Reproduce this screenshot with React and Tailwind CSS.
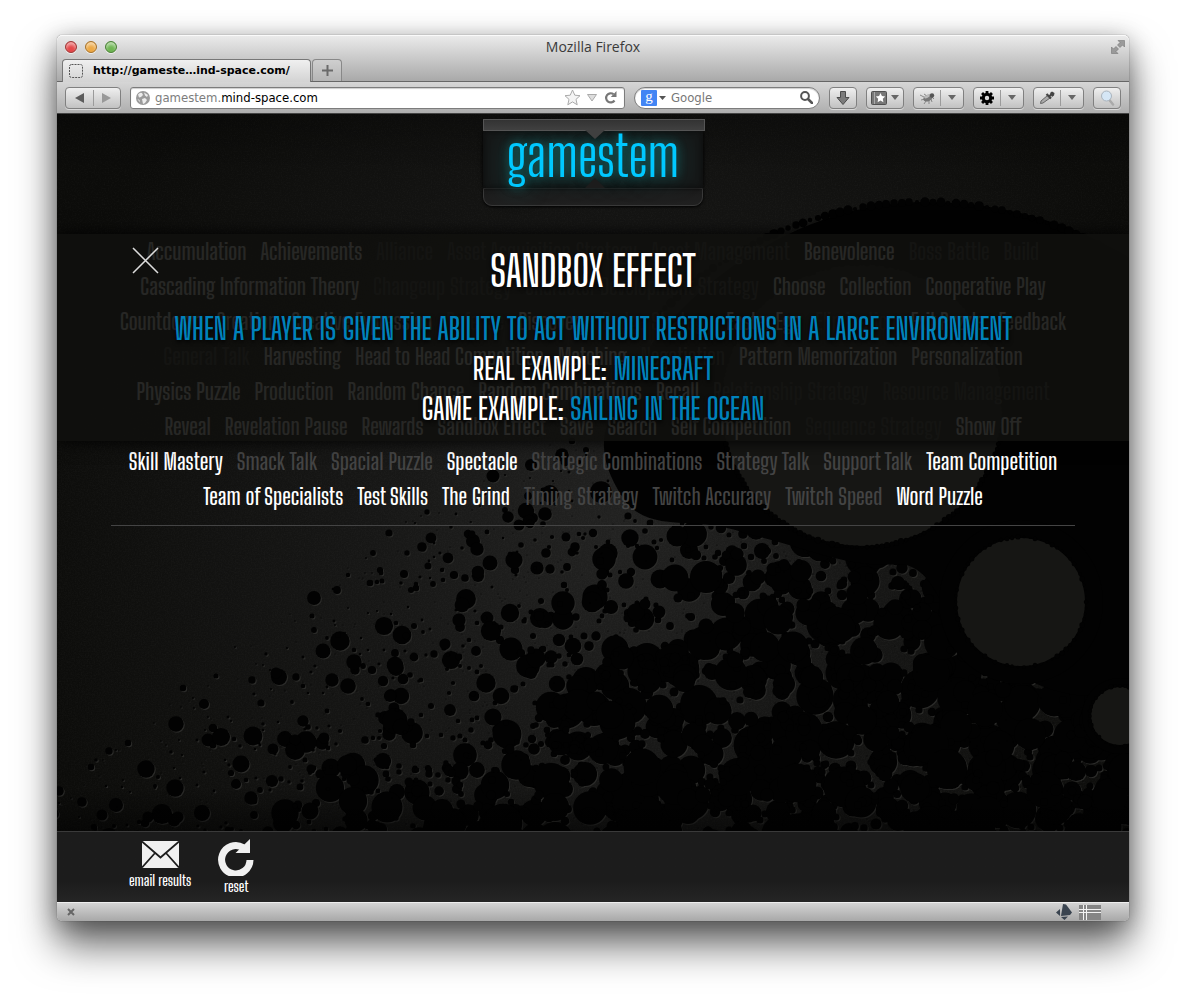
import React from "react";

const UI = "font-['Open_Sans','Noto_Sans',sans-serif]";
const DISPLAY = "font-['Big_Shoulders_Display','Oswald','Roboto_Condensed',sans-serif]";

// A leading "-" marks a mechanic that is not available.
const ROWS = [
  ["Accumulation", "Achievements", "-Alliance", "-Asset Acquisition Strategy", "-Asset Management", "Benevolence", "-Boss Battle", "-Build"],
  ["Cascading Information Theory", "-Changeup Strategy", "-Character Development Strategy", "Choose", "Collection", "Cooperative Play"],
  ["Countdown", "Creation", "Creative Expression", "-Defense", "Discovery", "-Dodge Strategy", "Easter Egg", "-Elimination", "Exit Puzzle", "Feedback"],
  ["-General Talk", "Harvesting", "Head to Head Competition", "Matching", "-Negotiation", "Pattern Memorization", "Personalization"],
  ["Physics Puzzle", "Production", "Random Chance", "Random Combinations", "Recall", "-Relationship Strategy", "-Resource Management"],
  ["Reveal", "Revelation Pause", "Rewards", "Sandbox Effect", "Save", "Search", "Self Competition", "-Sequence Strategy", "Show Off"],
  ["Skill Mastery", "-Smack Talk", "-Spacial Puzzle", "Spectacle", "-Strategic Combinations", "-Strategy Talk", "-Support Talk", "Team Competition"],
  ["Team of Specialists", "Test Skills", "The Grind", "-Timing Strategy", "-Twitch Accuracy", "-Twitch Speed", "Word Puzzle"],
];

function random(seed) {
  let s = seed;
  return () => {
    s = (s + 0x6d2b79f5) | 0;
    let t = Math.imul(s ^ (s >>> 15), 1 | s);
    t = (t + Math.imul(t ^ (t >>> 7), 61 | t)) ^ t;
    return ((t ^ (t >>> 14)) >>> 0) / 4294967296;
  };
}

function makeBubbles() {
  const rnd = random(77);
  const out = [];
  for (let i = 0; i < 13000; i++) {
    const x = rnd() * 1092 - 10;
    const y = 300 + rnd() * 430;
    const depth = (y - 672 + x * 0.78) / 1.27;
    const a = rnd();
    const b = rnd();
    if (depth < 0) continue;
    const t = Math.min(1, depth / 330);
    if (a > 0.14 + t * 0.32) continue;
    const r = 0.5 + Math.pow(b, 6) * (7 + t * 10) + (b > 0.3 ? t * 3 : 0);
    out.push([Math.round(x), Math.round(y), Math.round(r * 10) / 10]);
  }
  return out;
}
const BUBBLES = makeBubbles();

// Small circles set along an arc, so that its edge looks organic.
function rim(cx, cy, r, n, size) {
  const rnd = random(n);
  return Array.from({ length: n }, (_, i) => {
    const a = (i / n) * Math.PI * 2;
    return [Math.round(cx + Math.cos(a) * r), Math.round(cy + Math.sin(a) * r), size + rnd() * 3];
  });
}
const ARC = rim(868, 459, 371, 300, 2).filter(([x, y]) => y < 200 && x > 540);
const EDGES = [...rim(805, 291, 142, 180, 2), ...rim(964, 488, 65, 70, 1), ...rim(1063, 602, 30, 40, 1)];

function Backdrop() {
  return (
    <svg className="absolute inset-0 h-full w-full" viewBox="0 0 1072 717" preserveAspectRatio="xMidYMid slice" aria-hidden="true">
      <defs>
        <radialGradient id="base" gradientUnits="userSpaceOnUse" cx="560" cy="420" r="600">
          <stop offset="0" stopColor="#222221" />
          <stop offset="0.4" stopColor="#171716" />
          <stop offset="1" stopColor="#0c0c0a" />
        </radialGradient>
        <linearGradient id="shade" x1="0" y1="0" x2="0" y2="1">
          <stop offset="0" stopColor="#000" stopOpacity="0.25" />
          <stop offset="0.08" stopColor="#000" stopOpacity="0" />
          <stop offset="0.94" stopColor="#000" stopOpacity="0" />
          <stop offset="1" stopColor="#000" stopOpacity="0.5" />
        </linearGradient>
        <filter id="grain" x="0" y="0" width="100%" height="100%">
          <feTurbulence type="fractalNoise" baseFrequency="0.7" numOctaves="2" seed="4" />
          <feColorMatrix values="0 0 0 0 1  0 0 0 0 1  0 0 0 0 1  0.35 0 0 0 -0.12" />
        </filter>
      </defs>
      <rect width="1072" height="717" fill="url(#base)" />
      <rect width="1072" height="717" filter="url(#grain)" opacity="0.15" />
      <g fill="#2b2b29">
        {BUBBLES.map(([x, y, r], i) => <circle key={i} cx={x + 1} cy={y + 1} r={r} />)}
      </g>
      <g fill="#020202">
        {BUBBLES.map(([x, y, r], i) => <circle key={i} cx={x} cy={y} r={r} />)}
        <path d="M728 122C780 96 830 88 868 88C940 88 1010 106 1072 144V570C1030 600 960 570 900 520C880 480 870 450 840 450C790 455 740 430 690 420C640 400 600 420 570 390C550 360 535 330 560 290C590 220 650 160 728 122Z" />
        {ARC.map(([x, y, r], i) => <circle key={i} cx={x} cy={y} r={r} />)}
        <circle cx="964" cy="488" r="82" />
        <circle cx="1063" cy="602" r="38" />
      </g>
      <g fill="#161614">
        <circle cx="805" cy="291" r="141" />
        <circle cx="964" cy="488" r="64" />
        <circle cx="1063" cy="602" r="29" />
      </g>
      <g fill="#020202">
        {EDGES.map(([x, y, r], i) => <circle key={i} cx={x} cy={y} r={r / 1.5} />)}
      </g>
      <rect width="1072" height="717" fill="url(#shade)" />
    </svg>
  );
}

const BTN = "flex h-[22px] shrink-0 items-center justify-center rounded-[4px] border border-[#808080] bg-linear-to-b from-[#efefef] to-[#c2c2c2] shadow-[0_1px_0_#dadada]";

function Caret() {
  return <svg width="8" height="5" viewBox="0 0 8 5" aria-hidden="true"><path d="M0 0h8L4 5Z" fill="#666" /></svg>;
}

function SplitButton({ label, children }) {
  return (
    <div className={`${BTN} w-[51px]`}>
      <button aria-label={label} className="flex h-4 w-[27px] items-center justify-center border-r border-[#9b9b9b]">{children}</button>
      <button aria-label={`${label} options`} className="flex h-4 w-[22px] items-center justify-center"><Caret /></button>
    </div>
  );
}

function Light({ className, label }) {
  return <button aria-label={label} className={`h-3 w-3 rounded-full border shadow-[inset_0_3px_3px_rgba(255,255,255,0.5),0_1px_0_#eee] ${className}`} />;
}

function Chrome() {
  return (
    <header className={UI}>
      <div className="rounded-t-[5px] border-b border-[#666] bg-linear-to-b from-[#ececec] to-[#a9a9a9] shadow-[inset_0_1px_0_#fafafa]">
        <div className="flex h-6 items-center px-2">
          <div className="flex flex-1 gap-2">
            <Light label="Close" className="border-[#9a3a38] bg-[#e5484a]" />
            <Light label="Minimize" className="border-[#a4712c] bg-[#eda945]" />
            <Light label="Zoom" className="border-[#4c7f38] bg-[#6fb653]" />
          </div>
          <h1 className="text-[14px] leading-5 text-[#3a3a3a]">Mozilla Firefox</h1>
          <div className="flex flex-1 justify-end">
            <button aria-label="Full screen" className="-mr-1">
              <svg width="14" height="14" viewBox="0 0 14 14" fill="#9a9a9a" stroke="#777" strokeWidth="0.600"><path d="M7 .5h6.500V7l-2-2-2.500 2.500L6.500 5 9 2.500ZM.5 7l2 2L5 6.500 7.500 9 5 11.500l2 2H.5Z" /></svg>
            </button>
          </div>
        </div>
        <div className="flex h-[22px] items-end pl-[5px]">
          <div className="-mb-px flex h-[23px] w-[249px] items-center rounded-t-[4px] border border-b-0 border-[#777] bg-linear-to-b from-[#f0f0f0] to-[#d3d3d3] pl-[6px]">
            <svg width="14" height="14" viewBox="0 0 14 14" aria-hidden="true"><rect x="0.5" y="0.5" width="13" height="13" rx="2" fill="none" stroke="#555" strokeDasharray="2 1" /></svg>
            <span className="pl-[10px] font-['DejaVu_Sans',sans-serif] text-[11px] leading-5 font-bold text-black">http://gameste…ind-space.com/</span>
          </div>
          <button aria-label="New tab" className="ml-px flex h-[22px] w-[30px] items-center justify-center rounded-t-[4px] border border-b-0 border-[#888] bg-linear-to-b from-[#cfcfcf] to-[#b5b5b5]">
            <svg width="11" height="11" viewBox="0 0 11 11"><path d="M5.500 0v11M0 5.500h11" stroke="#6a6a6a" strokeWidth="2" /></svg>
          </button>
        </div>
      </div>
      <div className="flex h-8 items-center gap-[9px] border-b border-[#444] bg-linear-to-b from-[#d6d6d6] to-[#aeaeae] px-2">
        <div className={`${BTN} w-[56px]`}>
          <button aria-label="Back" className="flex h-4 flex-1 items-center justify-center border-r border-[#9b9b9b]"><svg width="9" height="10" viewBox="0 0 9 10"><path d="M9 0v10L0 5Z" fill="#5c5c5c" /></svg></button>
          <button aria-label="Forward" className="flex h-4 flex-1 items-center justify-center"><svg width="9" height="10" viewBox="0 0 9 10"><path d="M0 0v10l9-5Z" fill="#999" /></svg></button>
        </div>
        <label className="flex h-[22px] min-w-0 flex-1 items-center rounded-[3px] border border-[#7c7c7c] bg-white pr-[7px] pl-[5px] font-['DejaVu_Sans_Condensed','Open_Sans',sans-serif] text-[13px] shadow-[inset_0_1px_1px_#ccc]">
          <svg className="mr-[5px] shrink-0" width="14" height="14" viewBox="0 0 14 14" aria-hidden="true"><circle cx="7" cy="7" r="7" fill="#9a9a9a" /><path d="M2 3.500Q4 1 6 2L7 4 5 6 3 6.500ZM8 1.500 12 4 11 6 9 4.500ZM6 8 9 7 11 9 9 12 7 13 6.500 10.500ZM1.500 8 3.500 9 4 11.500Z" fill="#ececec" /></svg>
          <span className="text-[#7d7d7d]">gamestem.</span>
          <input aria-label="Address" defaultValue="mind-space.com" className="min-w-0 flex-1 bg-transparent text-black outline-none" />
          <button aria-label="Bookmark"><svg width="17" height="17" viewBox="0 0 17 17"><path d="M8.500 1l2.300 5.200 5.200.5-4 3.700 1.200 5.400-4.700-2.900-4.700 2.900L5 10.400l-4-3.700 5.200-.5Z" fill="#f4f4f4" stroke="#aaa" /></svg></button>
          <button aria-label="History" className="ml-[6px]"><svg width="10" height="8" viewBox="0 0 10 8"><path d="M.5.5h9L5 7Z" fill="#ddd" stroke="#aaa" /></svg></button>
          <button aria-label="Reload" className="ml-[7px]"><svg width="13" height="13" viewBox="0 0 13 13"><path d="M10.500 9.500A4.600 4.600 0 1 1 9.500 3.200" fill="none" stroke="#777" strokeWidth="2.200" /><path d="M12.500 0v6H6.800Z" fill="#777" /></svg></button>
        </label>
        <label className="flex h-[22px] w-[186px] shrink-0 items-center rounded-full border border-[#7c7c7c] bg-white px-[6px] shadow-[inset_0_1px_1px_#ccc]">
          <span className="flex h-4 w-4 items-center justify-center rounded-[1px] bg-[#4285f4] pb-1 font-['Liberation_Serif',serif] text-[15px] leading-4 text-white">g</span>
          <svg className="ml-[2px]" width="7" height="4" viewBox="0 0 7 4" aria-hidden="true"><path d="M0 0h7L3.500 4Z" fill="#555" /></svg>
          <input aria-label="Search" placeholder="Google" className="ml-[5px] min-w-0 flex-1 bg-transparent font-['DejaVu_Sans_Condensed','Open_Sans',sans-serif] text-[13px] text-black outline-none placeholder:text-[#777]" />
          <button aria-label="Search"><svg width="13" height="13" viewBox="0 0 13 13"><circle cx="5" cy="5" r="3.900" fill="none" stroke="#555" strokeWidth="2" /><path d="M8 8l4 4" stroke="#555" strokeWidth="2.500" strokeLinecap="round" /></svg></button>
        </label>
        <button aria-label="Downloads" className={`${BTN} w-[28px]`}><svg width="14" height="14" viewBox="0 0 14 14"><path d="M4.500.5h5V6.500H13L7 13.500 1 6.500h3.500Z" fill="#7b7b7b" stroke="#4b4b4b" /></svg></button>
        <button aria-label="Bookmarks" className={`${BTN} w-[38px] gap-1`}>
          <svg width="16" height="14" viewBox="0 0 16 14"><rect x="0.5" y="0.5" width="15" height="13" rx="1" fill="#777" stroke="#505050" /><path d="M3.500 1v12" stroke="#aaa" /><path d="M9.500 2l1.400 3.100 3.300.4-2.400 2.300.6 3.400-2.900-1.600-2.900 1.600.6-3.400-2.400-2.300 3.300-.4Z" fill="#fff" /></svg>
          <Caret />
        </button>
        <SplitButton label="Inspect">
          <svg width="17" height="14" viewBox="0 0 17 14"><path d="M1 4l4 2M2 9l4-1M5 13l2-3M10 13v-3M13 11l-1-3M5 3l3 2M15 8l-2-2" stroke="#888" /><ellipse cx="9" cy="7" rx="5" ry="3.200" transform="rotate(-25 9 7)" fill="#777" /><circle cx="13" cy="4.500" r="2.200" fill="#555" /><ellipse cx="8" cy="5.500" rx="3" ry="1.500" transform="rotate(-25 8 5.500)" fill="#bbb" /></svg>
        </SplitButton>
        <SplitButton label="Settings">
          <svg width="14" height="14" viewBox="-7 -7 14 14"><circle r="3.700" fill="none" stroke="#000" strokeWidth="3" />{[0, 45, 90, 135].map((a) => <path key={a} d="M-1.400-7h2.800v3h-2.800ZM-1.400 4h2.800v3h-2.800Z" transform={`rotate(${a})`} />)}</svg>
        </SplitButton>
        <SplitButton label="Color picker">
          <svg width="16" height="14" viewBox="0 0 16 14"><path d="M1.500 12.500 2 10 8.500 4.500 11 7 4 12Z" fill="#aaa" stroke="#666" /><path d="M7.500 3 12 7.500M10 5.500 14 2" stroke="#444" strokeWidth="2.200" /><path d="M11 2l2-1.500 2.500 1.500-.5 2.500-2 1.500Z" fill="#444" /></svg>
        </SplitButton>
        <button aria-label="Magnify" className={`${BTN} w-[28px]`}><svg width="15" height="16" viewBox="0 0 15 16"><path d="M9 9.500l4 5" stroke="#aaa" strokeWidth="2.500" strokeLinecap="round" /><circle cx="6.500" cy="6" r="5" fill="#d5e6f5" stroke="#aab4bd" /></svg></button>
      </div>
    </header>
  );
}

function Logo() {
  return (
    <a href="#home" className={`block w-[222px] ${DISPLAY}`}>
      <span className="relative z-10 block h-3 border border-[#555] bg-linear-to-b from-[#333] to-[#404040]">
        <svg className="absolute top-[10px] left-[101px]" width="20" height="9" viewBox="0 0 20 9" aria-hidden="true"><path d="M0 0h20L10 9Z" fill="#404040" /></svg>
      </span>
      <span className="relative mr-[2px] flex h-[57px] items-center justify-center bg-[#161818] pb-2 text-[56px] leading-[57px] font-normal text-[#00c8ff] shadow-[0_0_4px_#000,inset_0_0_6px_#0c0c0c] [text-shadow:0_0_10px_rgba(24,120,120,0.8),0_0_24px_rgba(24,120,120,0.8)]">
        gamestem
        <svg className="absolute bottom-0 left-[102px]" width="20" height="10" viewBox="0 0 20 10" aria-hidden="true"><path d="M0 10h20L10 0Z" fill="#1c1c1c" /></svg>
      </span>
      <span className="mr-[2px] block h-[18px] rounded-b-[9px] border border-[#393939] bg-linear-to-b from-[#1b1b1b] to-[#202020] shadow-[0_1px_3px_#000]" />
    </a>
  );
}

function Tag({ name }) {
  const off = name[0] === "-";
  return (
    <li>
      <a href="#mechanic" className={off ? "text-[#444]" : "text-white"}>{off ? name.slice(1) : name}</a>
    </li>
  );
}

function Detail() {
  return (
    <div className="absolute inset-x-0 top-0 bg-[#10100d]/90 pt-3 pb-[13px] text-center text-white uppercase shadow-[0_0_16px_#000] [text-shadow:0_2px_4px_#000]">
      <button aria-label="Close details" className="absolute top-[13px] left-[75px]">
        <svg width="27" height="27" viewBox="0 0 27 27"><path d="M1 1l25 25M26 1 1 26" stroke="#ddd" strokeWidth="1.500" /></svg>
      </button>
      <h2 className="text-[42px] leading-[50px] font-semibold">Sandbox Effect</h2>
      <div className="mt-3 text-[30px] leading-[40px] font-semibold">
        <p className="text-[#0082bb]">When a player is given the ability to act without restrictions in a large environment</p>
        <p>Real example: <span className="text-[#0082bb]">Minecraft</span></p>
        <p>Game example: <span className="text-[#0082bb]">Sailing in the ocean</span></p>
      </div>
    </div>
  );
}

export default function App() {
  return (
    <div className="overflow-hidden bg-white px-[57px] pt-[35px] pb-[79px]">
      <div className="overflow-hidden rounded-[5px] shadow-[0_24px_40px_rgba(0,0,0,0.6),0_4px_24px_rgba(0,0,0,0.3),0_0_1px_#555]">
        <Chrome />
        <main className={`relative flex min-h-[717px] flex-col overflow-hidden bg-[#0d0d0b] ${DISPLAY}`}>
          <Backdrop />
          <div className="relative flex h-[120px] justify-center pt-[5px] pl-[2px]"><Logo /></div>
          <section className="relative px-[54px]">
            <div className="border-b border-[#444] pb-[11px] text-[23px] leading-[35px] font-semibold">
              {ROWS.map((row) => (
                <ul key={row[0]} className="flex justify-center gap-[14px] whitespace-nowrap">
                  {row.map((name) => <Tag key={name} name={name} />)}
                </ul>
              ))}
            </div>
            <Detail />
          </section>
        </main>
        <footer className={`flex h-[71px] items-start gap-[27px] border-t border-[#3a3a3a] bg-linear-to-b from-[#1c1c1c] from-70% to-[#252525] pt-[7px] pl-[72px] text-[15px] leading-4 font-semibold text-white ${DISPLAY}`}>
          <button className="flex flex-col items-center gap-1 pt-[2px]">
            <svg width="37" height="27" viewBox="0 0 37 27" aria-hidden="true"><rect width="37" height="27" rx="1" fill="#f0f0f0" /><path d="M0 .5 18.500 16.500 37 .5M0 26.500 13 12M37 26.500 24 12" fill="none" stroke="#1c1c1c" strokeWidth="1.800" /></svg>
            email results
          </button>
          <button className="flex flex-col items-center gap-[2px]">
            <svg width="36" height="37" viewBox="0 0 36 37" aria-hidden="true"><path d="M25 8.500A14.200 14.200 0 1 0 32 21" fill="none" stroke="#f0f0f0" strokeWidth="7" /><path d="M32 0v14H17.500Z" fill="#f0f0f0" /></svg>
            reset
          </button>
        </footer>
        <div className="flex h-[19px] items-center justify-between border-t border-[#eee] bg-linear-to-b from-[#d4d4d4] to-[#a8a8a8] pr-7 pl-[10px]">
          <button aria-label="Close add-on bar"><svg width="8" height="8" viewBox="0 0 8 8"><path d="M1 1l6 6M7 1 1 7" stroke="#666" strokeWidth="2" /></svg></button>
          <div className="flex items-center gap-[6px]">
            <svg width="17" height="16" viewBox="0 0 17 16" aria-hidden="true"><path d="M7 0 10 .5 16 8.500 14 11 5 12ZM4 5v7L0 8.500ZM5 13l7-.5L8.500 16Z" fill="#3a4450" /></svg>
            <svg width="22" height="15" viewBox="0 0 22 15" aria-hidden="true"><path fill="#858585" d="M0 0h22v15H0Z" /><path d="M4.500 0v15M7.500 0v15M0 4.500h22M0 7.500h22" stroke="#f2f2f2" /></svg>
          </div>
        </div>
      </div>
    </div>
  );
}
